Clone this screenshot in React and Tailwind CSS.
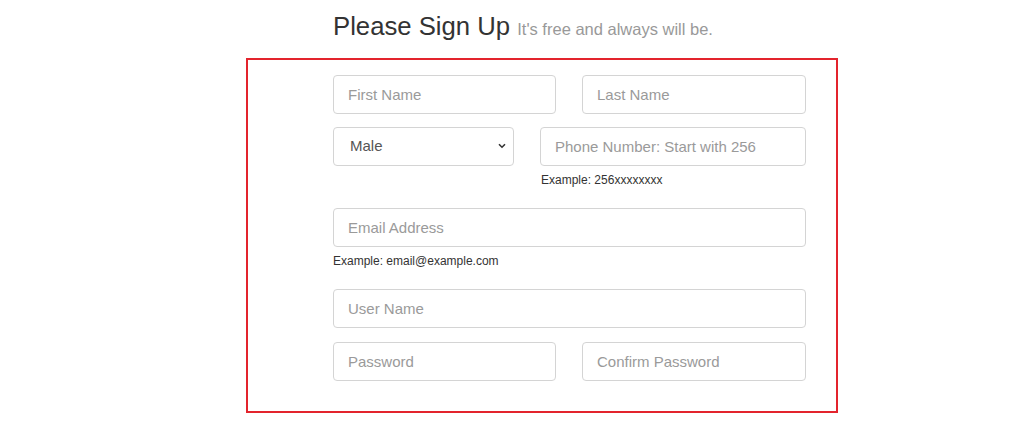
import { useState } from "react";

const inputCls =
  "block h-[39px] w-full rounded-[4px] border border-[#d4d4d4] bg-white px-[14px] text-[15px] text-[#555] placeholder:text-[#9a9a9a] outline-none";

export default function App() {
  const [gender, setGender] = useState("Male");

  return (
    <div className="min-h-[427px] bg-white font-['Liberation_Sans',Arial,sans-serif] text-[#333]">
      <div className="pl-[333px] pt-[10px]">
        <h1 className="text-[25.7px] leading-[32px] text-[#333]">
          Please Sign Up{" "}
          <small className="text-[16.5px] text-[#999]">It's free and always will be.</small>
        </h1>
      </div>

      <form className="ml-[246px] mt-[13px] w-[592px] border-2 border-[#e3242d] pb-[30px] pl-[85px] pr-[30px] pt-[15px]">
        <div className="flex gap-[26px]">
          <div className="w-[223px]">
            <input type="text" placeholder="First Name" className={inputCls} />
          </div>
          <div className="flex-1">
            <input type="text" placeholder="Last Name" className={inputCls} />
          </div>
        </div>

        <div className="mt-[13px] flex gap-[26px]">
          <div className="relative w-[181px]">
            <select
              value={gender}
              onChange={(e) => setGender(e.target.value)}
              className={inputCls + " appearance-none pl-[16px] text-[#444]"}
            >
              <option>Male</option>
              <option>Female</option>
            </select>
            <svg
              className="pointer-events-none absolute right-[8px] top-[16px]"
              width="8"
              height="6"
              viewBox="0 0 8 6"
            >
              <path d="M1 1.2l3 3 3-3" fill="none" stroke="#333" strokeWidth="1.6" />
            </svg>
          </div>
          <div className="flex-1">
            <input type="text" placeholder="Phone Number: Start with 256" className={inputCls} />
            <p className="mt-[7px] pl-[1px] text-[12px] leading-[15px] text-[#333]">Example: 256xxxxxxxx</p>
          </div>
        </div>

        <div className="mt-[20px]">
          <input type="email" placeholder="Email Address" className={inputCls} />
          <p className="mt-[7px] text-[12px] leading-[15px] text-[#333]">Example: email@example.com</p>
        </div>

        <div className="mt-[20px]">
          <input type="text" placeholder="User Name" className={inputCls} />
        </div>

        <div className="mt-[14px] flex gap-[26px]">
          <div className="w-[223px]">
            <input type="password" placeholder="Password" className={inputCls} />
          </div>
          <div className="flex-1">
            <input type="password" placeholder="Confirm Password" className={inputCls} />
          </div>
        </div>
      </form>
    </div>
  );
}
